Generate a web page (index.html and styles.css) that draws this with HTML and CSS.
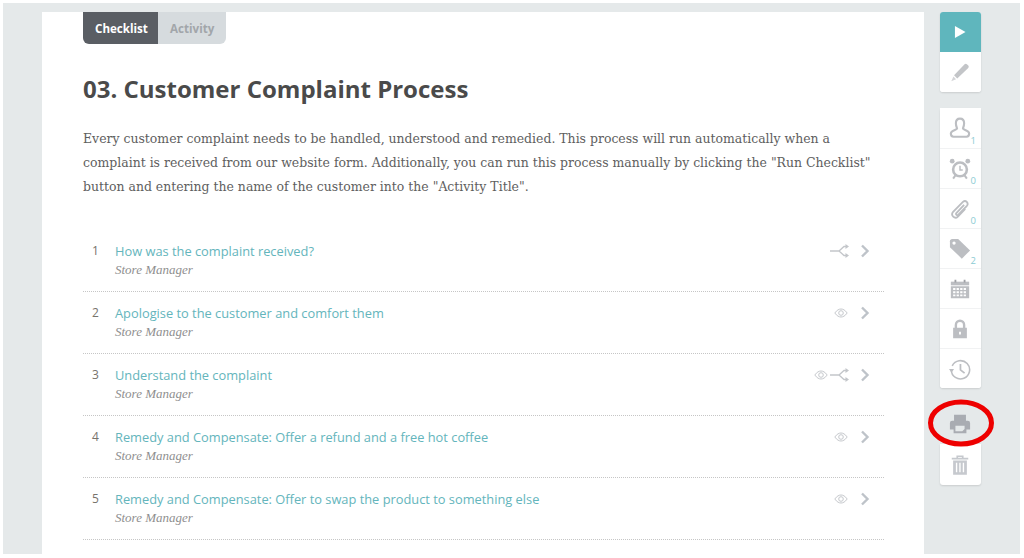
FILE: index.html
```html
<!DOCTYPE html>
<html lang="en">
<head>
<meta charset="utf-8">
<title>Customer Complaint Process</title>
<link rel="stylesheet" href="styles.css">
</head>
<body>
<div class="frame">
  <main class="panel">
    <div class="tabs"><span class="tab tab-active">Checklist</span><span class="tab">Activity</span></div>
    <h1>03. Customer Complaint Process</h1>
    <p class="intro">Every customer complaint needs to be handled, understood and remedied. This process will run automatically when a complaint is received from our website form. Additionally, you can run this process manually by clicking the "Run Checklist" button and entering the name of the customer into the "Activity Title".</p>
    <ol class="steps">
      <li class="step"><span class="num">1</span><div class="info"><a class="title">How was the complaint received?</a><em class="role">Store Manager</em></div>
        <div class="marks"><svg class="split" viewBox="0 0 20 14"><use href="#i-split"/></svg><svg class="chev" viewBox="0 0 10 14"><use href="#i-chev"/></svg></div></li>
      <li class="step"><span class="num">2</span><div class="info"><a class="title">Apologise to the customer and comfort them</a><em class="role">Store Manager</em></div>
        <div class="marks"><svg class="eye" viewBox="0 0 14 10"><use href="#i-eye"/></svg><svg class="chev" viewBox="0 0 10 14"><use href="#i-chev"/></svg></div></li>
      <li class="step"><span class="num">3</span><div class="info"><a class="title">Understand the complaint</a><em class="role">Store Manager</em></div>
        <div class="marks"><svg class="eye" viewBox="0 0 14 10"><use href="#i-eye"/></svg><svg class="split" viewBox="0 0 20 14"><use href="#i-split"/></svg><svg class="chev" viewBox="0 0 10 14"><use href="#i-chev"/></svg></div></li>
      <li class="step"><span class="num">4</span><div class="info"><a class="title">Remedy and Compensate: Offer a refund and a free hot coffee</a><em class="role">Store Manager</em></div>
        <div class="marks"><svg class="eye" viewBox="0 0 14 10"><use href="#i-eye"/></svg><svg class="chev" viewBox="0 0 10 14"><use href="#i-chev"/></svg></div></li>
      <li class="step"><span class="num">5</span><div class="info"><a class="title">Remedy and Compensate: Offer to swap the product to something else</a><em class="role">Store Manager</em></div>
        <div class="marks"><svg class="eye" viewBox="0 0 14 10"><use href="#i-eye"/></svg><svg class="chev" viewBox="0 0 10 14"><use href="#i-chev"/></svg></div></li>
    </ol>
  </main>
  <aside class="rail">
    <div class="group">
      <div class="btn btn-play"><svg class="ico" viewBox="0 0 24 24"><path d="M6.500 5.500l11.500 6.500L6.500 18.500z" fill="#fff"/></svg></div>
      <div class="btn"><svg class="ico" viewBox="0 0 24 24"><path d="M5.500 15.500L17 3.500c.8-.8 1.800-.8 2.500 0l1.500 1.500c.7.7.7 1.700 0 2.500L9 19z" fill="#c3c5c8"/><path d="M4.800 16.800l2.900 3L2.500 22z" fill="#d4d5d8"/></svg></div>
    </div>
    <div class="group">
      <div class="btn"><svg class="ico" viewBox="0 0 24 24"><path d="M12 1.800c-3 0-4.500 2-4.500 5 0 2.700.6 4 1.300 5.700 0 1.800-6.800 1.500-6.800 5.500 0 2.500 1 3.500 3 3.500h14c2 0 3-1 3-3.500 0-4-6.800-3.700-6.800-5.500.7-1.700 1.300-3 1.300-5.700 0-3-1.500-5-4.500-5z" fill="none" stroke="#bcbec2" stroke-width="2.300"/></svg><span class="count">1</span></div>
      <div class="btn"><svg class="ico" viewBox="0 0 24 24"><circle cx="12" cy="12.500" r="7.500" fill="none" stroke="#bcbec2" stroke-width="2.800"/><path d="M12 8.500v4.500h3" fill="none" stroke="#bcbec2" stroke-width="1.600"/><circle cx="3.500" cy="3.500" r="2.600" fill="#bcbec2"/><circle cx="20.500" cy="3.500" r="2.600" fill="#bcbec2"/><path d="M7 19l-2.500 3.500M17 19l2.500 3.500" stroke="#bcbec2" stroke-width="2.200"/></svg><span class="count">0</span></div>
      <div class="btn"><svg class="ico" viewBox="0 0 24 24"><path d="M16.500 7.500L8 16.500c-1 1.300.8 3 2 1.800L19.500 8.500c2.300-2.800-1.200-7-4.300-4.300L4.500 15c-3.200 3.900 1.800 8.700 5.200 5.300l8-8.500" fill="none" stroke="#bcbec2" stroke-width="2"/></svg><span class="count">0</span></div>
      <div class="btn"><svg class="ico" viewBox="0 0 24 24"><path d="M1 3.500C1 2 2 1 3.500 1H10l13 12.500-9 9L1 10z" fill="#bcbec2"/><circle cx="5.500" cy="5.500" r="1.800" fill="#fff"/></svg><span class="count">2</span></div>
      <div class="btn"><svg class="ico" viewBox="0 0 24 24"><path d="M2 4h20v4H2z" fill="#bcbec2"/><path d="M6 2h2v3H6zM16 2h2v3h-2z" fill="#9fa1a6"/><path fill-rule="evenodd" d="M2 9h20v13H2zM4.500 11v2h2.500v-2zM8.300 11v2h2.500v-2zM12.200 11v2h2.500v-2zM16 11v2h2.500v-2zM4.500 14.500v2h2.500v-2zM8.300 14.500v2h2.500v-2zM12.200 14.500v2h2.500v-2zM16 14.500v2h2.500v-2zM4.500 18v2h2.500v-2zM8.300 18v2h2.500v-2zM12.200 18v2h2.500v-2zM16 18v2h2.500v-2z" fill="#bcbec2"/></svg></div>
      <div class="btn"><svg class="ico" viewBox="0 0 24 24"><path d="M7.500 11V7.500a4.500 4.500 0 0 1 9 0V11" fill="none" stroke="#bcbec2" stroke-width="2.600"/><path fill-rule="evenodd" d="M4.500 10.500h15V22h-15zM11 15v3h2v-3z" fill="#bcbec2"/></svg></div>
      <div class="btn"><svg class="ico" viewBox="0 0 24 24"><path d="M3.500 8.500A10 10 0 1 1 2.500 13" fill="none" stroke="#bcbec2" stroke-width="1.700"/><path d="M0 12h5.500l-2.700 4z" fill="#bcbec2"/><path d="M12.500 6.500v6.500l4.500 3.500" fill="none" stroke="#bcbec2" stroke-width="1.900"/></svg></div>
    </div>
    <div class="group group-tools">
      <div class="btn btn-plain"><svg class="ico" viewBox="0 0 24 24"><path fill-rule="evenodd" d="M5.500 2h13v6.500h-13zM3.500 8.500h17A2.500 2.500 0 0 1 23 11v7h-4v4H5v-4H1v-7a2.500 2.500 0 0 1 2.500-2.500zM7 14v6h7.500l2.500-2.500V14z" fill="#a9acb2"/></svg></div>
      <div class="btn"><svg class="ico" viewBox="0 0 24 24"><path d="M3 5h18M9 5V2.500h6V5" fill="none" stroke="#c6c9ce" stroke-width="1.800"/><path fill-rule="evenodd" d="M4.500 7h15v15.500h-15zM7.500 9.500V20h1.500V9.500zM11.200 9.500V20h1.500V9.500zM15 9.500V20h1.500V9.500z" fill="#c6c9ce"/></svg></div>
    </div>
  </aside>
</div>
<svg class="ring" viewBox="0 0 70 50"><ellipse cx="35" cy="25" rx="30.500" ry="21" fill="none" stroke="#ee0000" stroke-width="5"/></svg>
<svg class="defs" aria-hidden="true">
  <symbol id="i-chev" viewBox="0 0 10 14"><path d="M2 1.500L7.500 7 2 12.500" fill="none" stroke="#bec3c9" stroke-width="2.400"/></symbol>
  <symbol id="i-eye" viewBox="0 0 14 10"><path d="M.8 5C3 2 5 1 7 1s4 1 6.200 4C11 8 9 9 7 9S3 8 .8 5z" fill="none" stroke="#c5c8cc" stroke-width="1"/><circle cx="7" cy="5" r="2.300" fill="none" stroke="#c5c8cc" stroke-width="1"/></symbol>
  <symbol id="i-split" viewBox="0 0 20 14"><path d="M0 7h9l5-4.500h3M9 7l5 4.500h3" fill="none" stroke="#c3c6ca" stroke-width="1.300"/><path d="M15.500 0l3.500 2.500-3.500 2.500zM15.500 9l3.500 2.500-3.500 2.500z" fill="#c3c6ca"/></symbol>
</svg>
</body>
</html>
```
FILE: styles.css
```css
* { box-sizing: border-box; }
html, body { margin: 0; padding: 0; background: #fff; }
body { width: 1024px; height: 558px; overflow: hidden; position: relative; font-family: "Open Sans", sans-serif; }
.frame { margin: 3px 4px 4px 3px; height: 551px; background: #e5e9ea; padding: 9px 0 0 39px; display: flex; align-items: flex-start; }
.panel { width: 882px; height: 542px; background: #fff; padding: 0 40px 0 41px; overflow: hidden; }
.tabs { display: inline-flex; height: 32px; border-radius: 0 0 6px 6px; overflow: hidden; font-size: 11.600px; font-weight: 700; }
.tab { display: flex; align-items: center; background: #d6dbde; color: #a2a6aa; padding: 0 12px; }
.tab-active { background: #5a5e64; color: #fff; width: 75px; }
h1 { margin: 28px 0 0; font-size: 24px; line-height: 34px; font-weight: 700; color: #4a4a4a; }
.intro { margin: 21px 0 0; font-family: "DejaVu Serif", serif; font-size: 12.460px; line-height: 24px; color: #5e5e5e; width: 800px; }
.steps { list-style: none; margin: 31px 0 0; padding: 0; }
.step { height: 62px; border-bottom: 1px dotted #c6c6c6; display: flex; padding: 11px 14px 0 0; }
.num { width: 32px; padding-left: 9px; font-size: 12px; line-height: 20px; color: #77736c; }
.info { flex: 1; display: flex; flex-direction: column; }
.title { font-size: 12.840px; line-height: 20px; color: #64b5bc; }
.role { font-family: "Liberation Serif", serif; font-size: 13px; line-height: 17px; color: #8f8f8f; }
.marks { display: flex; align-items: center; height: 18px; margin-top: 1px; }
.eye { width: 14px; height: 10px; margin-right: 12px; }
.eye:has(+ .split) { margin-right: 2px; }
.split { width: 20px; height: 14px; margin-right: 10px; }
.chev { width: 10px; height: 14px; }
.rail { width: 41px; margin-left: 16px; display: flex; flex-direction: column; gap: 16px; }
.group { background: #fff; border-radius: 3px; box-shadow: 0 1px 2px rgba(0,0,0,.12); display: flex; flex-direction: column; }
.group-tools { background: none; box-shadow: none; margin-top: -1px; }
.group-tools .btn { height: 41px; }
.btn { height: 40px; display: flex; align-items: center; justify-content: center; position: relative; background: #fff; }
.btn + .btn { border-top: 1px solid #f1f2f3; }
.btn:last-child { border-radius: 0 0 3px 3px; }
.group-tools .btn:last-child { box-shadow: 0 1px 2px rgba(0,0,0,.12); border-top: 0; }
.btn-play { background: #5fb6bd; border-radius: 3px 3px 0 0; }
.btn-play + .btn { border-top: 0; }
.btn-plain { background: none; }
.ico { width: 22px; height: 22px; margin-right: 1px; }
.count { position: absolute; right: 5px; bottom: 2px; font-size: 9.500px; line-height: 10px; color: #8ccbd3; }
.ring { position: absolute; left: 926px; top: 398px; width: 70px; height: 50px; }
.defs { position: absolute; width: 0; height: 0; }
```
